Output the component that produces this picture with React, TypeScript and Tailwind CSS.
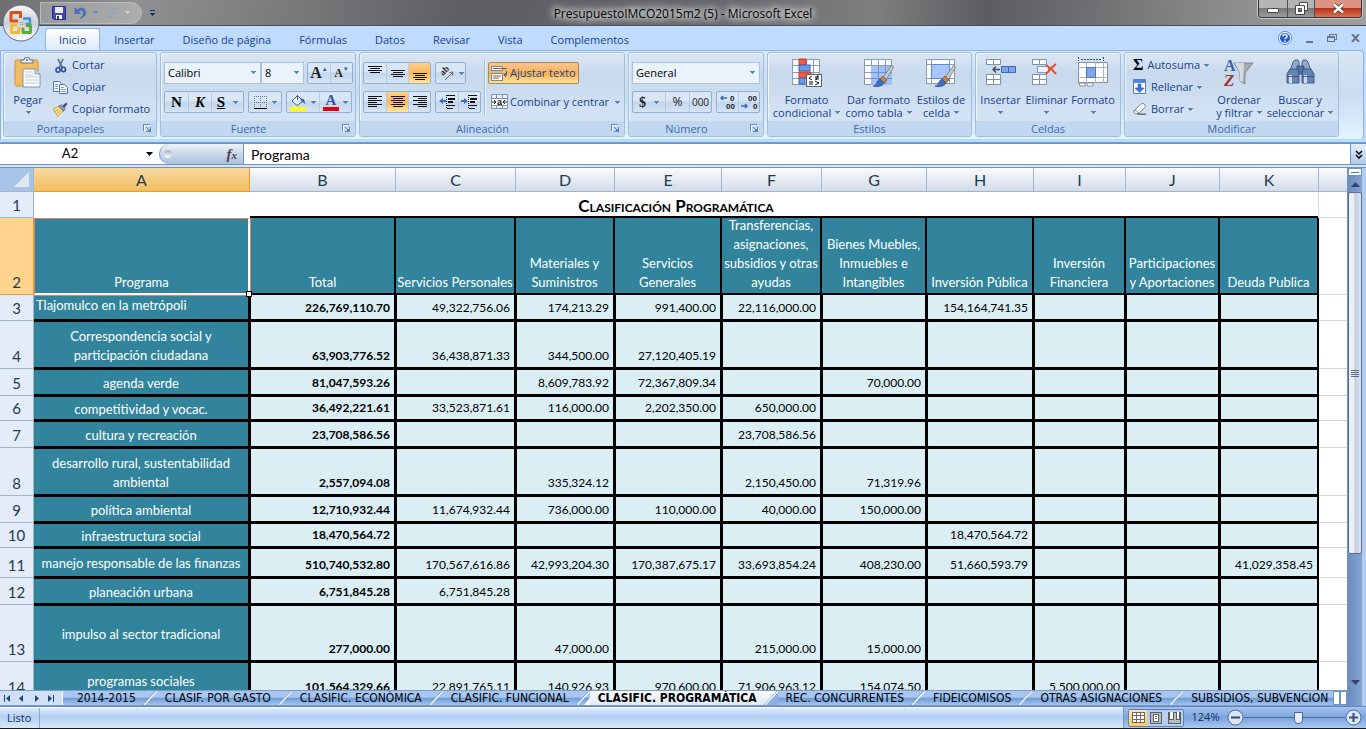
import type { ReactNode } from "react";

const columns = ["A", "B", "C", "D", "E", "F", "G", "H", "I", "J", "K"];

const headings = [
  "Total",
  "Servicios Personales",
  "Materiales y\nSuministros",
  "Servicios\nGenerales",
  "Transferencias,\nasignaciones,\nsubsidios y otras\nayudas",
  "Bienes Muebles,\nInmuebles e\nIntangibles",
  "Inversión Pública",
  "Inversión\nFinanciera",
  "Participaciones\ny Aportaciones",
  "Deuda Publica",
];

type Row = { n: number; h: string; name: string; values: string[] };

const rows: Row[] = [
  { n: 3, h: "h-[26px]", name: "Tlajomulco en la metrópoli", values: ["226,769,110.70", "49,322,756.06", "174,213.29", "991,400.00", "22,116,000.00", "", "154,164,741.35", "", "", ""] },
  { n: 4, h: "h-12", name: "Correspondencia social y\nparticipación ciudadana", values: ["63,903,776.52", "36,438,871.33", "344,500.00", "27,120,405.19", "", "", "", "", "", ""] },
  { n: 5, h: "h-[27px]", name: "agenda verde", values: ["81,047,593.26", "", "8,609,783.92", "72,367,809.34", "", "70,000.00", "", "", "", ""] },
  { n: 6, h: "h-[25px]", name: "competitividad y vocac.", values: ["36,492,221.61", "33,523,871.61", "116,000.00", "2,202,350.00", "650,000.00", "", "", "", "", ""] },
  { n: 7, h: "h-[27px]", name: "cultura y recreación", values: ["23,708,586.56", "", "", "", "23,708,586.56", "", "", "", "", ""] },
  { n: 8, h: "h-12", name: "desarrollo rural, sustentabilidad\nambiental", values: ["2,557,094.08", "", "335,324.12", "", "2,150,450.00", "71,319.96", "", "", "", ""] },
  { n: 9, h: "h-[27px]", name: "política ambiental", values: ["12,710,932.44", "11,674,932.44", "736,000.00", "110,000.00", "40,000.00", "150,000.00", "", "", "", ""] },
  { n: 10, h: "h-[25px]", name: "infraestructura social", values: ["18,470,564.72", "", "", "", "", "", "18,470,564.72", "", "", ""] },
  { n: 11, h: "h-[30px]", name: "manejo responsable de las finanzas", values: ["510,740,532.80", "170,567,616.86", "42,993,204.30", "170,387,675.17", "33,693,854.24", "408,230.00", "51,660,593.79", "", "", "41,029,358.45"] },
  { n: 12, h: "h-[27px]", name: "planeación urbana", values: ["6,751,845.28", "6,751,845.28", "", "", "", "", "", "", "", ""] },
  { n: 13, h: "h-[57px]", name: "impulso al sector tradicional", values: ["277,000.00", "", "47,000.00", "", "215,000.00", "15,000.00", "", "", "", ""] },
  { n: 14, h: "h-[38px]", name: "programas sociales", values: ["101,564,329.66", "22,891,765.11", "140,926.93", "970,600.00", "71,906,963.12", "154,074.50", "", "5,500,000.00", "", ""] },
];

const sheetTabs = [
  "2014-2015",
  "CLASIF. POR GASTO",
  "CLASIFIC. ECONÓMICA",
  "CLASIFIC. FUNCIONAL",
  "CLASIFIC. PROGRAMÁTICA",
  "REC. CONCURRENTES",
  "FIDEICOMISOS",
  "OTRAS ASIGNACIONES",
  "SUBSIDIOS, SUBVENCION",
];

const menu = ["Inicio", "Insertar", "Diseño de página", "Fórmulas", "Datos", "Revisar", "Vista", "Complementos"];

const Caret = ({ className = "text-[#5a82b8]" }: { className?: string }) => (
  <svg width="5" height="3" viewBox="0 0 5 3" className={`shrink-0 ${className}`} shapeRendering="crispEdges">
    <path d="M0 0h5v1H0zM1 1h3v1H1zM2 2h1v1H2z" fill="currentColor" />
  </svg>
);

/* horizontal strokes used by the alignment buttons: [x, y, width] */
const Lines = ({ d }: { d: number[][] }) => (
  <svg width="16" height="16" viewBox="0 0 16 16" shapeRendering="crispEdges">
    {d.map(([x, y, w], i) => (
      <rect key={i} x={x} y={y} width={w} height="1" fill="#111" />
    ))}
  </svg>
);

const Launcher = ({ label }: { label: string }) => (
  <button aria-label={label} className="absolute right-1 top-[3px] text-[#5f86b8]">
    <svg width="9" height="9" viewBox="0 0 9 9" shapeRendering="crispEdges" fill="currentColor">
      <path d="M0 0h7v1H1v6H0zM3 3h1v1H3zM4 4h1v1H4zM7 3h1v5H3V7h4zM5 5h2v2H5z" />
      <path d="M1 1h6v1H2v5H1z" fill="#fff" />
    </svg>
  </button>
);

type GroupProps = { title: string; width: string; launcher?: boolean; children: ReactNode };

const Group = ({ title, width, launcher, children }: GroupProps) => (
  <section
    className={`${width} h-[85px] shrink-0 flex flex-col rounded-[3px] border border-[#9ebfdb] bg-linear-to-b from-[#dce7f5] from-0% via-[#c8d9ed] via-25% to-[#d9e7f7] shadow-[inset_1px_1px_0_#eef5fc]`}
  >
    <div className="flex h-[68px] shrink-0">{children}</div>
    <div className={`relative h-[15px] rounded-b-[2px] bg-[#c1d8f0] text-center leading-[16px] text-[#3e6aaa] ${launcher ? "pr-[19px]" : ""}`}>
      {title}
      {launcher && <Launcher label={`Opciones de ${title}`} />}
    </div>
  </section>
);

const Segment = ({ children }: { children: ReactNode }) => (
  <div className="flex h-[22px] rounded-[2px] border border-[#92afd5] bg-linear-to-b from-[#d9e6f5] from-45% via-[#c3d6ec] via-50% to-[#d5e4f5] [&>button+button]:border-l [&>button+button]:border-[#b4cae5]">
    {children}
  </div>
);

type SegProps = { label: string; width?: string; active?: boolean; drop?: boolean; children: ReactNode };

const Seg = ({ label, width = "w-[22px]", active, drop, children }: SegProps) => (
  <button
    aria-label={label}
    className={`flex ${width} items-center justify-center gap-1 ${active ? "bg-linear-to-b from-[#fdd08b] via-[#ffb655] to-[#ffe59a]" : ""}`}
  >
    {children}
    {drop && <Caret />}
  </button>
);

const SmallButton = ({ icon, label, drop }: { icon: ReactNode; label: string; drop?: boolean }) => (
  <button className="flex h-[22px] items-center gap-1 whitespace-nowrap">
    {icon}
    <span>{label}</span>
    {drop && <Caret />}
  </button>
);

type LargeProps = { icon: ReactNode; lines: string[]; width: string };

const LargeButton = ({ icon, lines, width }: LargeProps) => (
  <button className={`flex ${width} h-[66px] shrink-0 flex-col items-center pt-1 leading-[13px] whitespace-nowrap`}>
    <span className="mb-1 h-8 shrink-0">{icon}</span>
    <span>{lines[0]}</span>
    <span className="flex h-[13px] items-center gap-1">
      {lines[1]}
      <Caret />
    </span>
  </button>
);

const Picker = ({ label, value, width }: { label: string; value: string; width: string }) => (
  <div className={`relative ${width} h-[22px] shrink-0`}>
    <select aria-label={label} className="h-full w-full appearance-none border border-[#abc1de] bg-[#eaf2fb] pl-[3px] text-black">
      <option>{value}</option>
    </select>
    <Caret className="pointer-events-none absolute right-[5px] top-[9px] text-[#5a82b8]" />
  </div>
);

/* ---- ribbon icons ---- */

const PasteIcon = () => (
  <svg width="30" height="32" viewBox="0 0 30 32">
    <rect x="2" y="3" width="23" height="26" rx="2" fill="#f2bd62" stroke="#c98f3c" />
    <path d="M8 6V3h3a3 3 0 0 1 6 0h3v3z" fill="#eceff2" stroke="#66707c" />
    <circle cx="14" cy="3" r="1" fill="#66707c" />
    <path d="M10 12h12l5 5v13H10z" fill="#fff" stroke="#7f93b4" />
    <path d="M22 12v5h5" fill="#d6e0ef" stroke="#7f93b4" />
    <path d="M12 15h8M12 18h8M12 20h13M12 23h13M12 26h13" stroke="#b7c4d8" />
  </svg>
);

const CutIcon = () => (
  <svg width="15" height="15" viewBox="0 0 15 15" fill="none">
    <path d="M5 1l4.500 9M10 1L6 10" stroke="#61788f" strokeWidth="1.800" />
    <ellipse cx="5" cy="12" rx="2" ry="2.200" stroke="#2a5199" strokeWidth="1.600" />
    <ellipse cx="10.500" cy="11.500" rx="2" ry="2.200" stroke="#2a5199" strokeWidth="1.600" />
  </svg>
);

const CopyIcon = () => (
  <svg width="15" height="15" viewBox="0 0 15 15" stroke="#4a74b9">
    <path d="M.5 1.500h6l2 2v8h-8z" fill="#fff" />
    <path d="M6.500 4.500h5l3 3v6h-8z" fill="#fff" />
    <path d="M2 4.500h3M2 6.500h3M2 8.500h3M8 7.500h3M8 9.500h5M8 11.500h5" stroke="#6f9be0" />
  </svg>
);

const BrushIcon = () => (
  <svg width="15" height="15" viewBox="0 0 16 15">
    <path d="M0 7l6-3 5 5-6 6z" fill="#f8e08e" stroke="#c2922e" strokeWidth=".8" />
    <path d="M2 9.500l4-2M4 12L8 9" stroke="#b88a2c" strokeWidth=".8" />
    <path d="M6 4l3-1.500L13 7l-2 2.500z" fill="#8e9cb0" stroke="#4f5e76" strokeWidth=".7" />
    <path d="M10 3.500L14 0l1.500 1.500L12 6z" fill="#3b4d7c" />
  </svg>
);

const BorderIcon = () => (
  <svg width="15" height="15" viewBox="0 0 15 15" shapeRendering="crispEdges" stroke="#67758a" strokeDasharray="1 1">
    <path d="M1 1.500h13M1 7.500h13M1.500 1v12M7.500 1v12M13.500 1v12" />
    <path d="M1 13.500h13" stroke="#000" strokeDasharray="none" />
  </svg>
);

const FillIcon = () => (
  <svg width="17" height="17" viewBox="0 0 17 17">
    <path d="M2 7l5.500-5.500L13 7l-6 4.500z" fill="#eaf1fb" stroke="#41608f" />
    <path d="M7.500 6V1" stroke="#41608f" />
    <path d="M11 4.500c3 0 4.500 2 3.500 6-1-2-2-3-4-3.500z" fill="#3a66b5" />
    <rect y="13" width="16" height="4" fill="#ff0" />
  </svg>
);

const FontColorIcon = () => (
  <span className="flex w-4 flex-col items-center">
    <span className="font-['Liberation_Serif',serif] text-[15px] leading-[13px] font-bold text-[#34589c]">A</span>
    <span className="h-1 w-full bg-red-600" />
  </span>
);

const OrientIcon = () => (
  <svg width="17" height="16" viewBox="0 0 17 16">
    <text transform="translate(5 11) rotate(-45)" fontSize="9" fontWeight="bold" fontFamily="Liberation Serif, serif" fill="#222">
      ab
    </text>
    <path d="M7 15L15 7M15 7l-3.500.5M15 7l-.5 3.500" stroke="#666" fill="none" />
  </svg>
);

const IndentIcon = ({ flip }: { flip?: boolean }) => (
  <svg width="17" height="16" viewBox="0 0 17 16" shapeRendering="crispEdges">
    <path d="M7 1h9v1H7zM9 4h7v2H9zM9 7h5v2H9zM7 11h9v1H7zM8 14h6v1H8z" fill="#111" />
    <path d="M7 1v14" stroke="#111" strokeDasharray="1 1" />
    <path d={flip ? "M0 6h3V4l4 3-4 3V8H0z" : "M7 6H4V4L0 7l4 3V8h3z"} fill="#3a6fd0" shapeRendering="auto" />
  </svg>
);

const WrapIcon = () => (
  <svg width="17" height="16" viewBox="0 0 17 16">
    <rect x=".5" y="1.500" width="11" height="4" fill="#fff" stroke="#7488a6" />
    <path d="M2 3.500h14" stroke="#7a5a3c" />
    <rect x=".5" y="8.500" width="11" height="7" fill="#fff" stroke="#7488a6" />
    <path d="M2 11h8M2 13h6" stroke="#8b5a32" />
    <path d="M15.500 6v4H13m2-2l-2 2 2 2" stroke="#2f5aa5" fill="none" />
  </svg>
);

const MergeIcon = () => (
  <svg width="17" height="16" viewBox="0 0 17 16">
    <path d="M.5.500h16v14H.5z" fill="#e9f0f9" stroke="#7e93b3" />
    <path d="M0 4.500h17M0 11.500h17M5.500 0v4M11.500 0v4M5.500 12v3M11.500 12v3" stroke="#7e93b3" />
    <path d="M1 5h15v6H1z" fill="#fff" />
    <text x="6" y="10.500" fontSize="9" fontWeight="bold" fontFamily="Liberation Sans, sans-serif" fill="#111">
      a
    </text>
    <path d="M1 8h4M3 6l2 2-2 2M16 8h-4M14 6l-2 2 2 2" stroke="#222" fill="none" />
  </svg>
);

const DecimalIcon = ({ less }: { less?: boolean }) => (
  <svg width="17" height="16" viewBox="0 0 17 16" fontFamily="Liberation Sans, sans-serif" fontSize="8" fontWeight="bold" fill="#222">
    <text x={less ? 7 : 11} y="7">{less ? "00" : "0"}</text>
    <text x={less ? 12 : 7} y="15">{less ? "0" : "00"}</text>
    <path d={less ? "M0 12h6M4 10l2 2-2 2" : "M8 4H2m2-2L2 4l2 2"} stroke="#3568c8" strokeWidth="1.500" fill="none" />
  </svg>
);

/* blank sheet grid shared by the style buttons */
const Grid = () => (
  <>
    <rect x="1.500" y="2.500" width="27" height="25" fill="#fff" />
    <path d="M1.500 2v26M8.500 2v26M15.500 2v26M22.500 2v26M28.500 2v26M1 2.500h28M1 8.500h28M1 15.500h28M1 21.500h28M1 27.500h28" stroke="#8a9ab3" />
  </>
);

const Paintbrush = () => (
  <>
    <path d="M20 21L28 9c1.500-1 3 0 2 2l-7 12z" fill="#c9ccd0" stroke="#6f7680" strokeWidth=".8" />
    <path d="M17 22l3-3 4 4-3 3z" fill="#b98a45" stroke="#7a5728" strokeWidth=".8" />
    <path d="M10 29c4 0 3-5 7-7l4 4c-2 4-7 4-11 3z" fill="#3d6fc4" stroke="#2b509b" strokeWidth=".8" />
  </>
);

const CondIcon = () => (
  <svg width="32" height="32" viewBox="0 0 32 32">
    <Grid />
    <path d="M8 2h7v6H8zM8 15h12v6H8z" fill="#f15a3c" stroke="#c23a22" />
    <path d="M8 8h11v6H8zM8 21h6v6H8z" fill="#6d98ec" stroke="#3b63b4" />
    <rect x="15.500" y="17.500" width="15" height="12" fill="#fff" stroke="#53607a" />
    <path d="M21 19l-3 2 3 2M18 25h4M18 27h4M24 20h4M24 22h4M27 18l-2 5M24 24l4 2-4 2" stroke="#111" fill="none" />
  </svg>
);

const TableStyleIcon = () => (
  <svg width="32" height="32" viewBox="0 0 32 32">
    <Grid />
    <path d="M8 9h21v19H8z" fill="#a3c1f8" />
    <path d="M15.500 9v18M22.500 9v18M8 15.500h21M8 21.500h21" stroke="#6e92d2" />
    <Paintbrush />
  </svg>
);

const CellStyleIcon = () => (
  <svg width="32" height="32" viewBox="0 0 32 32">
    <rect x="1.500" y="2.500" width="28" height="24" fill="#fff" stroke="#8a9ab3" />
    <path d="M6.500 2v25M24.500 2v25M1 7.500h28M1 21.500h28" stroke="#8a9ab3" />
    <path d="M6.500 7.500h18v14h-18z" fill="#a8c6fa" stroke="#5f88cc" />
    <Paintbrush />
  </svg>
);

const CellBoxes = () => (
  <path d="M1.500 2.500h14v5h-14zM8.500 2v5M1.500 17.500h14v10h-14zM8.500 17v10M1 22.500h15" fill="#fff" stroke="#8391a8" />
);

const InsertIcon = () => (
  <svg width="32" height="32" viewBox="0 0 32 32">
    <CellBoxes />
    <path d="M16.500 9.500h14v6h-14zM23.500 9v6" fill="#7ea6ee" stroke="#3f66ae" />
    <path d="M15 12.500H8m3-3l-3 3 3 3" stroke="#3c4a60" strokeWidth="1.400" fill="none" />
  </svg>
);

const DeleteIcon = () => (
  <svg width="32" height="32" viewBox="0 0 32 32">
    <CellBoxes />
    <path d="M6.500 9.500h11v6h-11z" fill="#eef4fd" stroke="#2f559e" strokeDasharray="1 1" />
    <path d="M15 8c3 2 7 5 10 9M25 7c-4 3-7 6-10 10" stroke="#ee4423" strokeWidth="2" fill="none" />
  </svg>
);

const FormatIcon = () => (
  <svg width="32" height="32" viewBox="0 0 32 32">
    <path d="M1.500 0v4M26.500 0v4M4 2.500h20" stroke="#3a465a" strokeDasharray="2 1" />
    <path d="M1.500 5.500h29v20h-29z" fill="#fff" stroke="#8391a8" />
    <path d="M9.500 5v21M18.500 5v21M26.500 5v21M1 10.500h29M1 20.500h29" stroke="#a8b5c9" />
    <path d="M9.500 10.500h9v10h-9z" fill="#7ea4ea" stroke="#4c78c4" />
    <path d="M2 26h6v3H3zM10 26h6v3h-6z" fill="#fff" stroke="#8391a8" />
  </svg>
);

const FillDownIcon = () => (
  <svg width="14" height="16" viewBox="0 0 14 16">
    <path d="M.5.500h12v14H.5z" fill="#fff" stroke="#5b7db4" />
    <path d="M1 1h11v3H1z" fill="#4f86e0" />
    <path d="M5 5h3v4h3l-4.500 4.500L2 9h3z" fill="#3d75da" stroke="#2955ab" strokeWidth=".6" />
  </svg>
);

const EraserIcon = () => (
  <svg width="14" height="14" viewBox="0 0 15 14">
    <path d="M1 9l7-7c2-1.500 4-1 5 1 .5 1 0 2-.5 2.500L6 12H3c-1.500 0-2.500-1.500-2-3z" fill="#fafafa" stroke="#6e7787" />
    <path d="M1 9c2-1 4 0 5 3" stroke="#6e7787" fill="none" />
    <path d="M5 12.500h9" stroke="#222" />
  </svg>
);

const SortIcon = () => (
  <svg width="32" height="32" viewBox="0 0 32 32">
    <path d="M11 6h19l-8 10v11l-5-3v-8z" fill="#a6a9ad" stroke="#777b80" strokeWidth=".8" />
    <path d="M12 6h9l-1 19-3-1v-8z" fill="#d8dadd" />
    <text x="1" y="14" fontSize="16" fontWeight="bold" fontFamily="Liberation Serif, serif" fill="#3961b0">A</text>
    <text x="1" y="29" fontSize="17" fontWeight="bold" fontStyle="italic" fontFamily="Liberation Serif, serif" fill="#9c3536">Z</text>
  </svg>
);

const FindIcon = () => (
  <svg width="32" height="32" viewBox="0 0 32 32" stroke="#2f4872" strokeWidth=".8">
    <path d="M9 5l2-2h3l1 2v9H6zM18 5l1-2h3l2 2 3 9h-9z" fill="#8fa9cf" />
    <path d="M13 9h7v8h-7z" fill="#5573a6" />
    <path d="M6 12h8l1 5v9H3v-9zM19 12h8l3 5v9H18v-9z" fill="#6583b5" />
    <path d="M5 18h3v8H5zM20 18h3v8h-3z" fill="#cfdcf0" stroke="none" />
    <path d="M3 19.500h12M18 19.500h12" />
  </svg>
);

const OfficeLogo = () => (
  <svg width="38" height="38" viewBox="0 0 38 38">
    <defs>
      <linearGradient id="orb" x1="0" y1="0" x2="0" y2="1">
        <stop offset="0" stopColor="#f6f7f9" />
        <stop offset=".5" stopColor="#c9d0da" />
        <stop offset="1" stopColor="#fff" />
      </linearGradient>
    </defs>
    <circle cx="19" cy="19" r="18" fill="url(#orb)" stroke="#5c6a80" />
    <g fill="none" strokeLinejoin="round">
      <path d="M16 17H9V8.500h9.500v5.500" stroke="#dd4f16" strokeWidth="3" />
      <path d="M21 14.500h7v5.500h-4.500" stroke="#3f8fd8" strokeWidth="2.400" />
      <path d="M15 21H9.500v7.500H17V23" stroke="#f4b830" strokeWidth="2.800" />
      <path d="M21 23.500v5h7.500V21.500H24" stroke="#58a837" strokeWidth="2.800" />
    </g>
    <path d="M18 18h1v1h-1zM20 18h1v1h-1zM18 20h1v1h-1zM20 20h1v1h-1z" fill="#d0792f" />
  </svg>
);

const TitleBar = () => (
  <header className="relative flex h-[26px] shrink-0 items-center border-b border-[#4a4b4d] bg-[linear-gradient(100deg,#6d6e70_0%,#8f9091_10%,#77787a_22%,#5d5e62_34%,#66676b_52%,#7e7e80_64%,#5c5d61_72%,#6f7073_80%,#8d8d8c_90%,#a0a09e_100%)]">
    <div className="ml-10 flex h-[22px] w-[102px] shrink-0 items-center rounded-r-full border border-[#b9babb] bg-white/25 pl-[11px]">
      <button aria-label="Guardar">
        <svg width="14" height="14" viewBox="0 0 14 14">
          <path d="M.5.500h13v13H2l-1.500-1.500z" fill="#4545b8" stroke="#2d2d8c" />
          <path d="M3 1h8v6H3z" fill="#e8ecf8" />
          <path d="M4 9h6v4H4z" fill="#fff" />
          <path d="M5 10h2v3H5z" fill="#2d2d8c" />
        </svg>
      </button>
      <button aria-label="Deshacer" className="ml-2 flex items-center gap-1.5">
        <svg width="13" height="13" viewBox="0 0 14 14" fill="none">
          <path d="M1 2v6h6L5 6c3-3 6-1 5 3-.3 1.500-1.500 3-3 4 4-1 6-4 5.500-7C12 2 7 1 3.500 4.500z" fill="#4a78cf" stroke="#2c55a3" strokeWidth=".6" />
        </svg>
        <Caret className="text-[#5b86c8]" />
      </button>
      <button aria-label="Rehacer" className="ml-2 flex items-center gap-1.5 opacity-70">
        <svg width="13" height="13" viewBox="0 0 14 14" fill="none">
          <path d="M12 2v5H7l2-2C6 3 3 5 4 9c.3 1.500 1 3 2 4-3-1-5-4-4-7 1-4 5-5 8-2z" fill="#a8b8cd" stroke="#7f90a8" strokeWidth=".6" />
        </svg>
        <Caret className="text-[#dfe6ef]" />
      </button>
    </div>
    <button aria-label="Personalizar barra" className="ml-2 flex flex-col gap-0.5">
      <span className="h-px w-[5px] bg-[#20345c]" />
      <Caret className="text-[#20345c]" />
    </button>
    <h1 className="pointer-events-none absolute inset-x-0 top-[5px] text-center text-[12px] leading-[17px] text-black [text-shadow:0_0_6px_#fff,0_0_8px_#fff,0_0_12px_#fff]">
      PresupuestoIMCO2015m2 (5) - Microsoft Excel
    </h1>
    <div className="absolute right-1 top-0 flex h-[18px] overflow-hidden rounded-b border border-t-0 border-[#33373c] shadow-[0_0_0_1px_#c9c9c9]">
      <button aria-label="Minimizar" className="flex w-7 items-end justify-center bg-linear-to-b from-[#b4b5b7] from-45% via-[#77797c] via-50% to-[#9b9c9e] pb-1">
        <span className="h-[5px] w-3 rounded-[1px] border border-[#45484d] bg-white" />
      </button>
      <button aria-label="Restaurar" className="flex w-7 items-center justify-center border-x border-[#4e5155] bg-linear-to-b from-[#b4b5b7] from-45% via-[#77797c] via-50% to-[#9b9c9e]">
        <svg width="13" height="13" viewBox="0 0 13 13" fill="#fff" stroke="#45484d" fillRule="evenodd">
          <path d="M4.500.500h8v8h-8z" />
          <path d="M.5 3.500h9v9h-9zM3.500 6.500h3v3h-3z" />
        </svg>
      </button>
      <button aria-label="Cerrar" className="flex w-[46px] items-center justify-center bg-linear-to-b from-[#dc9384] from-45% via-[#b9301a] via-50% to-[#d9714e]">
        <svg width="13" height="11" viewBox="0 0 13 11">
          <path d="M2 1.500l9 8M11 1.500l-9 8" stroke="#4a3733" strokeWidth="4" />
          <path d="M2 1.500l9 8M11 1.500l-9 8" stroke="#fff" strokeWidth="2.400" />
        </svg>
      </button>
    </div>
    <button aria-label="Botón de Office" className="absolute left-[2px] top-1 z-10">
      <OfficeLogo />
    </button>
  </header>
);

const Menu = () => (
  <nav className="flex h-[24px] shrink-0 items-end bg-[#bfdbff] pl-[45px]">
    {menu.map((item, i) => (
      <a
        key={item}
        href="#"
        className={`h-[22px] leading-[21px] ${i === 0 ? "rounded-t-[3px] border border-b-0 border-[#8db2e3] bg-linear-to-b from-white to-[#dfeafa] px-[13px]" : "px-3.5 pt-px"}`}
      >
        {item}
      </a>
    ))}
    <div className="ml-auto flex h-full items-center gap-3.5 pr-1.5 text-[#6b7685]">
      <button aria-label="Ayuda">
        <svg width="14" height="14" viewBox="0 0 14 14">
          <circle cx="7" cy="7" r="6.500" fill="#fff" stroke="#5a86c7" />
          <circle cx="7" cy="7" r="5" fill="#1f5cd0" />
          <path d="M5 5.500c0-2.500 4-2.500 4-.2C9 7 7 6.800 7 8.200M7 9.500V11" stroke="#fff" strokeWidth="1.500" fill="none" />
        </svg>
      </button>
      <button aria-label="Minimizar libro" className="h-2.5 pt-2">
        <span className="block h-0.5 w-[7px] bg-current" />
      </button>
      <button aria-label="Restaurar libro">
        <svg width="10" height="8" viewBox="0 0 10 8" fill="none" stroke="currentColor" shapeRendering="crispEdges">
          <path d="M2.500 2V.5h7v5H8M.5 2.500h7v5h-7zM0 3.500h8" />
        </svg>
      </button>
      <button aria-label="Cerrar libro">
        <svg width="9" height="8" viewBox="0 0 9 8">
          <path d="M1 0l7 8M8 0L1 8" stroke="currentColor" strokeWidth="2" />
        </svg>
      </button>
    </div>
  </nav>
);

const Ribbon = () => (
  <div className="shrink-0 border-b border-[#6f9dd9] bg-[#bfdbff] pr-[2px] pb-[2px]">
    <div className="flex h-[90px] gap-[3px] rounded-r border border-[#8db2e3] border-b-[#9ee6f5] bg-linear-to-b from-[#d9e6f5] via-[#cadcf0] to-[#e3f4ff] pt-px pl-[2px]">
      <Group title="Portapapeles" width="w-[154px]" launcher>
        <LargeButton width="w-12" icon={<PasteIcon />} lines={["Pegar", ""]} />
        <div className="flex flex-col pt-px pl-px">
          <SmallButton icon={<CutIcon />} label="Cortar" />
          <SmallButton icon={<CopyIcon />} label="Copiar" />
          <SmallButton icon={<BrushIcon />} label="Copiar formato" />
        </div>
      </Group>

      <Group title="Fuente" width="w-[196px]" launcher>
        <div className="flex flex-col gap-[7px] px-[3px] pt-[9px]">
          <div className="flex">
            <Picker label="Fuente" value="Calibri" width="w-[97px]" />
            <Picker label="Tamaño" value="8" width="w-[43px]" />
            <div className="ml-[3px]">
              <Segment>
                <Seg label="Aumentar tamaño">
                  <span className="flex font-['Liberation_Serif',serif] text-[16px] font-bold text-[#222]">A</span>
                  <span className="-ml-1 -mt-2 text-[6px] text-[#2f5aa5]">▲</span>
                </Seg>
                <Seg label="Disminuir tamaño">
                  <span className="font-['Liberation_Serif',serif] text-[12px] font-bold text-[#222]">A</span>
                  <span className="-ml-1 -mt-2 text-[6px] text-[#2f5aa5]">▼</span>
                </Seg>
              </Segment>
            </div>
          </div>
          <div className="flex gap-1 font-['Liberation_Serif',serif] text-[15px] font-bold text-black">
            <Segment>
              <Seg label="Negrita" width="w-[23px]">N</Seg>
              <Seg label="Cursiva" width="w-[23px]"><i>K</i></Seg>
              <Seg label="Subrayado" width="w-[32px]" drop><u className="mr-1">S</u></Seg>
            </Segment>
            <Segment>
              <Seg label="Bordes" width="w-[32px]" drop><BorderIcon /></Seg>
            </Segment>
            <Segment>
              <Seg label="Color de relleno" width="w-[32px]" drop><FillIcon /></Seg>
              <Seg label="Color de fuente" width="w-[32px]" drop><FontColorIcon /></Seg>
            </Segment>
          </div>
        </div>
      </Group>

      <Group title="Alineación" width="w-[266px]" launcher>
        <div className="flex flex-col gap-[7px] pt-[9px] pl-[3px]">
          <div className="flex gap-1">
            <Segment>
              <Seg label="Alinear arriba"><Lines d={[[1, 1, 14], [3, 3, 10], [1, 5, 14], [3, 7, 10]]} /></Seg>
              <Seg label="Alinear al medio"><Lines d={[[1, 5, 14], [3, 7, 10], [1, 9, 14], [3, 11, 10]]} /></Seg>
              <Seg label="Alinear abajo" active><Lines d={[[1, 8, 14], [3, 10, 10], [1, 12, 14], [3, 14, 10]]} /></Seg>
            </Segment>
            <Segment>
              <Seg label="Orientación" width="w-[29px]" drop><OrientIcon /></Seg>
            </Segment>
          </div>
          <div className="flex gap-1">
            <Segment>
              <Seg label="Izquierda"><Lines d={[[1, 2, 14], [1, 4, 9], [1, 6, 14], [1, 8, 9], [1, 10, 14], [1, 12, 9]]} /></Seg>
              <Seg label="Centrar" active><Lines d={[[1, 2, 14], [3, 4, 10], [1, 6, 14], [3, 8, 10], [1, 10, 14], [3, 12, 10]]} /></Seg>
              <Seg label="Derecha"><Lines d={[[1, 2, 14], [6, 4, 9], [1, 6, 14], [6, 8, 9], [1, 10, 14], [6, 12, 9]]} /></Seg>
            </Segment>
            <Segment>
              <Seg label="Disminuir sangría"><IndentIcon /></Seg>
              <Seg label="Aumentar sangría"><IndentIcon flip /></Seg>
            </Segment>
          </div>
        </div>
        <div className="mx-[3px] my-1.5 w-px bg-[#9ebcdd] shadow-[1px_0_0_#f2f8fe]" />
        <div className="flex flex-col items-start gap-[7px] pt-[9px]">
          <button className="flex h-[22px] items-center gap-0.5 rounded-[2px] border border-[#a58a5c] bg-linear-to-b from-[#f7c68e] via-[#f9b157] to-[#fee28d] px-0.5 whitespace-nowrap">
            <WrapIcon /> Ajustar texto
          </button>
          <button className="flex h-[22px] items-center gap-0.5 pl-[3px] whitespace-nowrap">
            <MergeIcon /> <span className="mr-1">Combinar y centrar</span> <Caret />
          </button>
        </div>
      </Group>

      <Group title="Número" width="w-[136px]" launcher>
        <div className="flex flex-col gap-[7px] pt-[9px] pl-[3px]">
          <Picker label="Formato de número" value="General" width="w-[128px]" />
          <div className="flex gap-1 text-[12px] text-[#222]">
            <Segment>
              <Seg label="Moneda" width="w-[32px]" drop><b className="mr-1 font-['Liberation_Serif',serif] text-[14px]">$</b></Seg>
              <Seg label="Porcentaje" width="w-[24px]">%</Seg>
              <Seg label="Millares"><span className="text-[10px]">000</span></Seg>
            </Segment>
            <Segment>
              <Seg label="Aumentar decimales" width="w-[21px]"><DecimalIcon /></Seg>
              <Seg label="Disminuir decimales" width="w-[21px]"><DecimalIcon less /></Seg>
            </Segment>
          </div>
        </div>
      </Group>

      <Group title="Estilos" width="w-[205px]">
        <LargeButton width="w-[77px]" icon={<CondIcon />} lines={["Formato", "condicional"]} />
        <LargeButton width="w-[67px]" icon={<TableStyleIcon />} lines={["Dar formato", "como tabla"]} />
        <LargeButton width="w-[58px]" icon={<CellStyleIcon />} lines={["Estilos de", "celda"]} />
      </Group>

      <Group title="Celdas" width="w-[146px]">
        <LargeButton width="w-[49px]" icon={<InsertIcon />} lines={["Insertar", ""]} />
        <LargeButton width="w-[43px]" icon={<DeleteIcon />} lines={["Eliminar", ""]} />
        <LargeButton width="w-[50px]" icon={<FormatIcon />} lines={["Formato", ""]} />
      </Group>

      <Group title="Modificar" width="w-[215px]">
        <div className="flex w-[84px] flex-col pt-px pl-2">
          <SmallButton icon={<span className="w-3.5 font-['Liberation_Serif',serif] text-[16px] font-bold text-black">Σ</span>} label="Autosuma" drop />
          <SmallButton icon={<FillDownIcon />} label="Rellenar" drop />
          <SmallButton icon={<EraserIcon />} label="Borrar" drop />
        </div>
        <LargeButton width="w-[60px]" icon={<SortIcon />} lines={["Ordenar", "y filtrar"]} />
        <LargeButton width="w-[62px]" icon={<FindIcon />} lines={["Buscar y", "seleccionar"]} />
      </Group>
    </div>
  </div>
);

const FormulaBar = () => (
  <div className="shrink-0 bg-[#d6e5f7] pb-[2px]">
    <div className="flex h-[22px] border-y border-[#6f94c0] bg-white font-['Lato',sans-serif] text-[13px] text-black">
      <input aria-label="Cuadro de nombres" defaultValue="A2" className="w-[140px] shrink-0 text-center outline-none" />
      <button aria-label="Nombres" className="flex w-[19px] shrink-0 items-center justify-center">
        <svg width="7" height="4" viewBox="0 0 7 4"><path d="M0 0h7L3.500 4z" /></svg>
      </button>
      <div className="flex w-[85px] shrink-0 items-center justify-between rounded-l-full border-r border-l border-[#6f94c0] bg-linear-to-b from-[#eef3f9] to-[#a9bfdc] pr-1.5 pl-1">
        <span className="size-2 rounded-full bg-linear-to-b from-[#9fb0c8] to-white" />
        <button aria-label="Insertar función" className="font-['Liberation_Serif',serif] text-[15px] font-bold text-[#444] italic">
          f<span className="text-[11px]">x</span>
        </button>
      </div>
      <input aria-label="Barra de fórmulas" defaultValue="Programa" className="min-w-0 flex-1 pl-[7px] text-[14px] outline-none" />
      <button aria-label="Expandir barra de fórmulas" className="flex w-4 shrink-0 items-center justify-center border-l border-[#6f94c0] bg-linear-to-b from-[#e6effa] to-[#b0c8e8]">
        <svg width="8" height="9" viewBox="0 0 8 9" fill="none" stroke="#000" strokeWidth="1.500">
          <path d="M1 1l3 3 3-3M1 5l3 3 3-3" />
        </svg>
      </button>
    </div>
  </div>
);

const RowHead = ({ n, active }: { n: number; active?: boolean }) => (
  <th
    scope="row"
    className={`border-r border-b align-bottom text-[15px] leading-5 font-normal text-[#1f3b4d] ${active ? "border-[#f29536] bg-[#ffd58d]" : "border-[#9eb6ce] bg-[#e4ecf7]"}`}
  >
    <div className="pb-0.5">{n}</div>
  </th>
);

const Sheet = () => (
  <div className="min-h-0 min-w-0 flex-1 overflow-hidden bg-white">
    <table className="w-full table-fixed border-separate border-spacing-0 font-['Lato',sans-serif] text-[12px] leading-[19px] text-black [&_td]:p-0 [&_th]:p-0">
      <colgroup>
        <col className="w-[34px]" />
        <col className="w-[216px]" />
        <col className="w-[146px]" />
        <col className="w-[120px]" />
        <col className="w-[99px]" />
        <col className="w-[107px]" />
        <col className="w-[100px]" />
        <col className="w-[105px]" />
        <col className="w-[107px]" />
        <col className="w-[92px]" />
        <col className="w-[94px]" />
        <col className="w-[99px]" />
        <col />
      </colgroup>
      <thead>
        <tr className="h-[24px] text-[16px]">
          <th className="border-r border-b border-[#9eb6ce] bg-[#a9c4e9]">
            <button aria-label="Seleccionar todo" className="flex w-full justify-end pr-1">
              <svg width="15" height="15" viewBox="0 0 15 15"><path d="M15 0v15H0z" fill="#e3e9f2" /></svg>
            </button>
          </th>
          {columns.map((c) => (
            <th
              key={c}
              scope="col"
              className={`border-r border-b font-normal text-[#1f3b4d] ${c === "A" ? "border-[#f29536] bg-linear-to-b from-[#f9d99f] to-[#f1c15f]" : "border-[#9eb6ce] bg-linear-to-b from-[#f9fcfd] to-[#d3dbe9]"}`}
            >
              {c}
            </th>
          ))}
          <td className="border-b border-[#9eb6ce] bg-linear-to-b from-[#f9fcfd] to-[#d3dbe9]" />
        </tr>
      </thead>
      <tbody>
        <tr className="h-[26px]">
          <RowHead n={1} />
          <td colSpan={11} className="relative border-r border-[#d0d7e5] text-center text-[17px] font-bold [font-variant:small-caps]">
            Clasificación Programática
            <span className="absolute right-0 bottom-0 left-[216px] h-0.5 bg-black" />
          </td>
          <td className="border-b border-[#d0d7e5]" />
        </tr>
        <tr className="h-[77px] text-center text-[13px] text-white">
          <RowHead n={2} active />
          <td className="relative border-t border-r-2 border-b-2 border-l border-t-[#d9825f] border-r-white border-b-white border-l-[#d9825f] bg-[#31849b] align-bottom">
            <div className="pb-px">Programa</div>
            <span className="absolute -right-1 -bottom-1 z-10 size-1.5 border border-black bg-white" />
          </td>
          {headings.map((h, i) => (
            <td key={h} className={`border-r-2 border-b-2 border-black bg-[#31849b] ${i === 0 ? "border-l border-l-[#d9825f]" : ""}`}>
              <div className="flex h-[75px] items-end justify-center overflow-hidden pb-px whitespace-pre">{h}</div>
            </td>
          ))}
          <td className="border-b border-[#d0d7e5]" />
        </tr>
        {rows.map((r) => (
          <tr key={r.n} className={r.h}>
            <RowHead n={r.n} />
            <td
              className={`border-r-2 border-b-2 border-black bg-[#31849b] text-[13px] whitespace-pre text-white ${r.n === 3 ? "border-t border-t-[#d9825f] align-top" : "border-t text-center align-middle"}`}
            >
              <div className={r.n === 3 ? "pl-0.5" : "pt-0.5"}>{r.name}</div>
            </td>
            {r.values.map((v, i) => (
              <td
                key={i}
                className={`border-r-2 border-b-2 border-l border-black bg-[#daeef3] text-right align-bottom ${r.n === 3 ? "" : "border-t"} ${i === 0 ? "font-bold" : ""}`}
              >
                <div className="pr-1 pb-0.5">{v}</div>
              </td>
            ))}
            <td className="border-b border-[#d0d7e5]" />
          </tr>
        ))}
      </tbody>
    </table>
  </div>
);

const ScrollBar = () => (
  <div className="flex w-[19px] shrink-0 flex-col items-stretch border-r-4 border-l border-r-[#b3cdf2] border-l-[#6f94c0] bg-linear-to-r from-[#6a8cbd] to-[#86a4d0]">
    <div className="flex h-2 items-center justify-center border border-[#6f94c0] bg-white">
      <span className="h-px w-2 bg-[#4a74b0]" />
    </div>
    <button aria-label="Subir" className="flex h-4 items-center justify-center">
      <svg width="9" height="5" viewBox="0 0 9 5"><path d="M0 5h9L4.500 0z" fill="#33436a" /></svg>
    </button>
    <div className="flex flex-3 flex-col items-center justify-center gap-px rounded-[2px] border border-[#5b6a92] bg-linear-to-r from-[#eceff4] from-40% via-[#c3cddd] via-50% to-[#dfe5ee]">
      <span className="h-px w-2 bg-[#5f6d84]" />
      <span className="h-px w-2 bg-[#5f6d84]" />
      <span className="h-px w-2 bg-[#5f6d84]" />
      <span className="h-px w-2 bg-[#5f6d84]" />
    </div>
    <div className="flex-1" />
    <button aria-label="Bajar" className="mb-4 flex h-4 items-center justify-center">
      <svg width="9" height="5" viewBox="0 0 9 5"><path d="M0 0h9L4.500 5z" fill="#33436a" /></svg>
    </button>
  </div>
);

const SheetTabs = () => (
  <div className="flex h-4 shrink-0 border-y border-[#7b9ccb] bg-linear-to-b from-[#a9c6ee] from-45% via-[#6c9bd8] via-50% to-[#a5c4ec] text-black">
    <div className="flex w-[63px] shrink-0 items-center justify-around border-r border-white bg-[#cfe0f7] pr-1 text-[#1c4587]">
      {["M0 0h1v7H0zM6 0v7L2 3.500z", "M5 0v7L1 3.500z", "M2 0v7l4-3.500z", "M6 0h1v7H6zM1 0v7l4-3.500z"].map((d, i) => (
        <button key={d} aria-label={["Primera hoja", "Hoja anterior", "Hoja siguiente", "Última hoja"][i]}>
          <svg width="7" height="7" viewBox="0 0 7 7"><path d={d} fill="currentColor" /></svg>
        </button>
      ))}
    </div>
    <div className="flex min-w-0 flex-1 overflow-hidden pl-1.5">
      {sheetTabs.map((t, i) => (
        <button
          key={t}
          className={`flex shrink-0 items-center pl-2 font-['DejaVu_Sans_Condensed','DejaVu_Sans',sans-serif] text-[12px] leading-[14px] whitespace-nowrap ${i === 4 ? "bg-linear-to-b from-white to-[#dbe8f8] font-bold" : ""}`}
        >
          {t}
          <svg width="14" height="14" viewBox="0 0 14 14" className="ml-[7px]">
            {i === 4 && <path d="M0 14L13 0h1v14z" fill="#8db0e2" />}
            {i === 3 && <path d="M13 8l1-2v8H8z" fill="#fff" />}
            <path d="M0 14L13 0" stroke="#5f7fae" />
            <path d="M1 14L14 0" stroke="#fff" strokeWidth="1.300" />
          </svg>
        </button>
      ))}
    </div>
    <div className="flex w-3.5 shrink-0">
      <span className="flex-1 border border-[#6f94c0] bg-white" />
      <span className="flex-1 border border-[#6f94c0] bg-white" />
    </div>
  </div>
);

const ZoomButton = ({ label, plus }: { label: string; plus?: boolean }) => (
  <button aria-label={label} className="shrink-0">
    <svg width="17" height="17" viewBox="0 0 17 17">
      <circle cx="8.500" cy="8.500" r="7.500" fill="#dbe6f5" stroke="#4c6a98" />
      <path d={plus ? "M4 8.500h9M8.500 4v9" : "M4 8.500h9"} stroke="#3f5375" strokeWidth="2.200" />
    </svg>
  </button>
);

const StatusBar = () => (
  <footer className="flex h-[23px] shrink-0 items-center border-t border-[#5f86bd] border-b border-b-[#16181d] bg-linear-to-b from-[#dfebfb] from-5% via-[#b3cff5] via-45% to-[#d9e9fc] text-[#15305e] shadow-[inset_0_1px_0_#fff]">
    <span className="w-10 border-r border-[#8ea9d0] pl-[7px] leading-[20px]">Listo</span>
    <div className="ml-auto flex h-full items-center border-l border-[#7597c9] bg-linear-to-b from-[#a5c3ee] via-[#7ba5de] to-[#a9c8f2] pl-1">
      <div className="flex h-[18px] overflow-hidden rounded-[2px] border border-[#5c82ba] bg-[#b7cfee]">
        <button aria-label="Normal" className="flex w-[18px] items-center justify-center bg-linear-to-b from-[#ffe3b0] to-[#ffc95c]">
          <svg width="13" height="11" viewBox="0 0 13 11" shapeRendering="crispEdges">
            <path d="M.5.500h12v10H.5zM4.500 0v11M8.500 0v11M0 3.500h13M0 7.500h13" fill="#fff" stroke="#6e6a62" />
          </svg>
        </button>
        <button aria-label="Diseño de página" className="flex w-[18px] items-center justify-center">
          <svg width="12" height="12" viewBox="0 0 12 12" shapeRendering="crispEdges" stroke="#5b5f66">
            <path d="M.5.500h11v11H.5z" fill="#b9bdc3" />
            <path d="M3.500 2.500h5v7h-5zM5 4.500h2M5 6.500h2" fill="#fff" />
          </svg>
        </button>
        <button aria-label="Vista previa" className="flex w-[18px] items-center justify-center">
          <svg width="13" height="12" viewBox="0 0 13 12" shapeRendering="crispEdges" stroke="#5b5f66">
            <path d="M.5.500h12v11H.5z" fill="#b9bdc3" />
            <path d="M1.500 0v7h4V0M8.500 0v7h3V0" fill="#fff" />
          </svg>
        </button>
      </div>
      <span className="w-[43px] text-center">124%</span>
      <ZoomButton label="Alejar" />
      <label className="relative flex w-[101px] items-center">
        <span className="sr-only">Zoom</span>
        <input
          type="range"
          min="10"
          max="200"
          defaultValue="114"
          className="h-4 w-full appearance-none bg-[linear-gradient(#4b6da3,#4b6da3)] bg-[length:100%_1px] bg-center bg-no-repeat [&::-webkit-slider-thumb]:h-3 [&::-webkit-slider-thumb]:w-[9px] [&::-webkit-slider-thumb]:appearance-none [&::-webkit-slider-thumb]:rounded-b-[4px] [&::-webkit-slider-thumb]:border [&::-webkit-slider-thumb]:border-[#4b6693] [&::-webkit-slider-thumb]:bg-[#e6eefa]"
        />
      </label>
      <ZoomButton label="Acercar" plus />
      <span className="w-1" />
    </div>
  </footer>
);

export default function App() {
  return (
    <div className="flex h-screen flex-col overflow-hidden bg-[#bfdbff] font-['Open_Sans',sans-serif] text-[11px] text-[#15428b]">
      <TitleBar />
      <Menu />
      <Ribbon />
      <FormulaBar />
      <main className="flex min-h-0 flex-1 border-t border-[#6f94c0]">
        <div className="flex min-w-0 flex-1 flex-col">
          <Sheet />
          <SheetTabs />
        </div>
        <ScrollBar />
      </main>
      <StatusBar />
    </div>
  );
}
